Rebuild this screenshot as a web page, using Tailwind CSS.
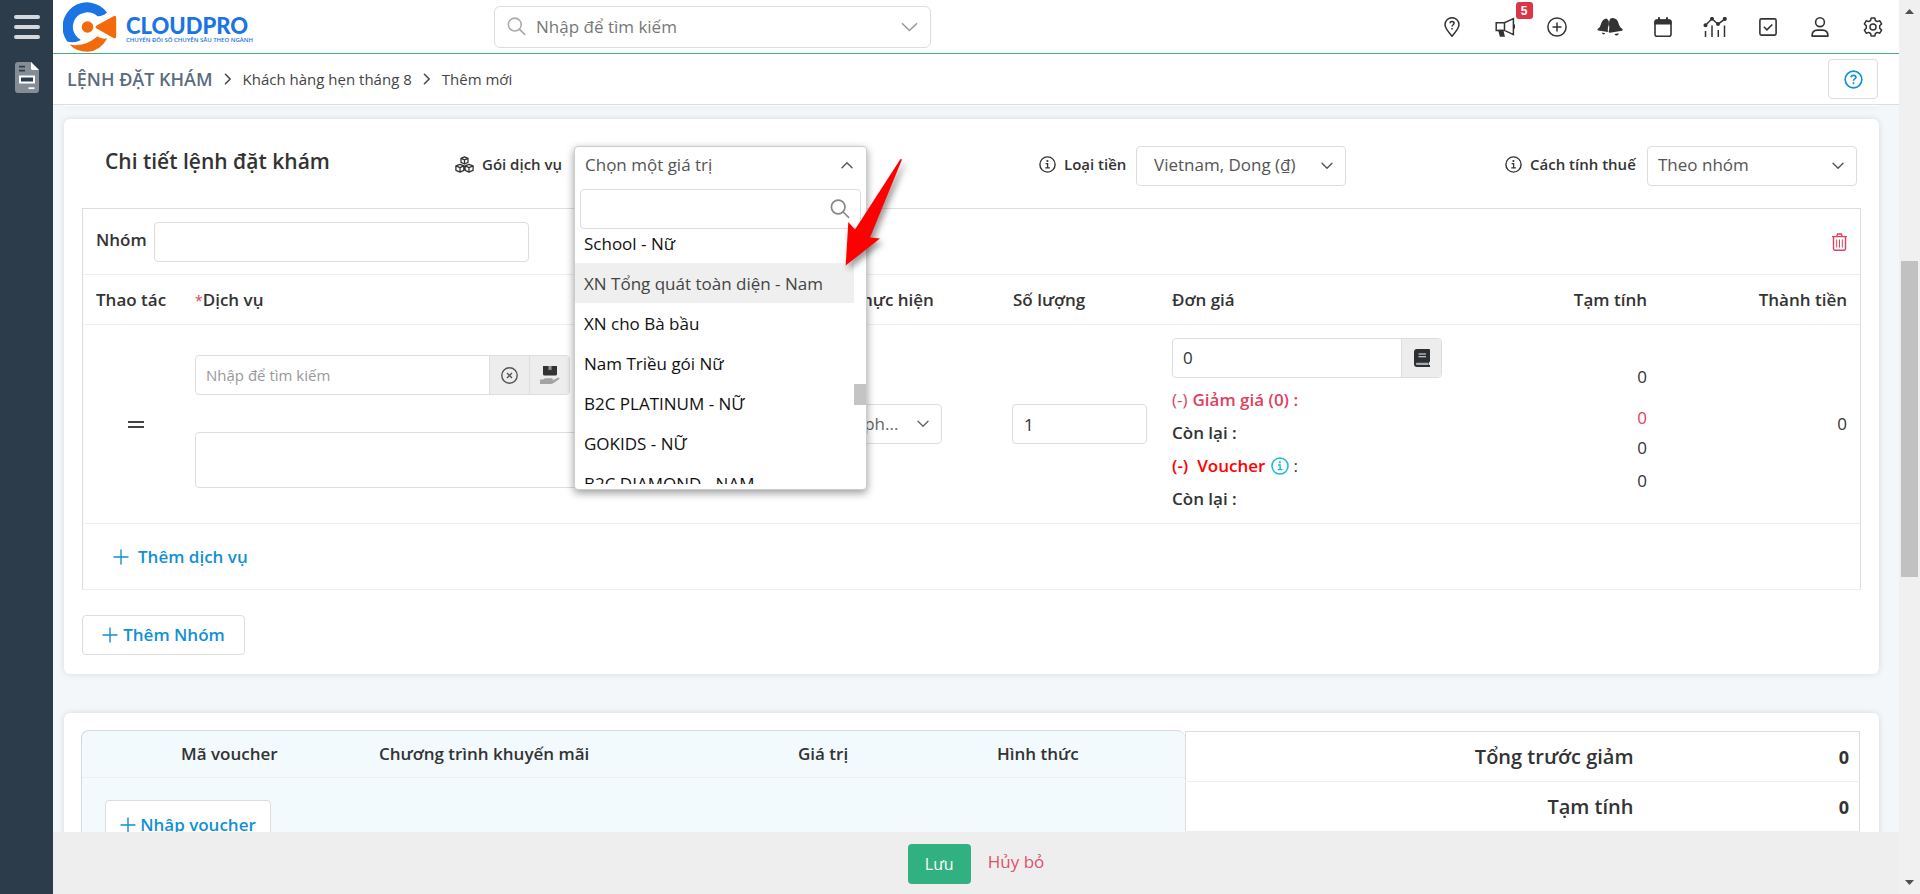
<!DOCTYPE html>
<html lang="vi">
<head>
<meta charset="utf-8">
<meta name="viewport" content="width=device-width, initial-scale=1">
<title>Lệnh đặt khám - Thêm mới</title>
<script src="https://cdn.jsdelivr.net/npm/@tailwindcss/browser@4"></script>
</head>
<body class="flex h-screen overflow-hidden bg-[#f3f7fa] font-['Open_Sans','Noto_Sans',sans-serif] text-[17px] text-[#333]">

<svg class="hidden" aria-hidden="true">
  <symbol id="chev" viewBox="0 0 12 8"><path d="M1 1.2 6 6.2 11 1.2" fill="none" stroke="currentColor" stroke-width="1.4" stroke-linecap="round" stroke-linejoin="round"/></symbol>
  <symbol id="info" viewBox="0 0 17 17"><circle cx="8.5" cy="8.5" r="7.6" fill="none" stroke="currentColor" stroke-width="1.4"/><path d="M6.6 7.6h2v4.2M6.3 11.9h4.6" fill="none" stroke="currentColor" stroke-width="1.3"/><circle cx="8.4" cy="5" r="1.1" fill="currentColor"/></symbol>
  <symbol id="plus" viewBox="0 0 16 16"><path d="M8 1v14M1 8h14" fill="none" stroke="currentColor" stroke-width="1.4" stroke-linecap="round"/></symbol>
  <symbol id="search" viewBox="0 0 20 20"><circle cx="8.2" cy="8" r="6.8" fill="none" stroke="currentColor" stroke-width="1.7"/><path d="m13.2 13 5.4 5.3" stroke="currentColor" stroke-width="1.7" stroke-linecap="round"/></symbol>
  <symbol id="crumb" viewBox="0 0 8 12"><path d="M1.4 1.2 6.2 6 1.4 10.8" fill="none" stroke="currentColor" stroke-width="1.5" stroke-linecap="round" stroke-linejoin="round"/></symbol>
</svg>

<aside class="flex w-[53px] shrink-0 flex-col items-center bg-[#2d3c4b]">
  <button aria-label="Menu" class="mt-[15px] flex w-[26px] flex-col gap-[6px]">
    <span class="h-[4px] w-full rounded-full bg-[#d5d8dc]"></span>
    <span class="h-[4px] w-full rounded-full bg-[#d5d8dc]"></span>
    <span class="h-[4px] w-full rounded-full bg-[#d5d8dc]"></span>
  </button>
  <a href="#" aria-label="Lệnh đặt khám" class="mt-[23px]">
    <svg class="h-[31px] w-6" viewBox="0 0 24 31"><path d="M3 0h13l8 8v20a3 3 0 0 1-3 3H3a3 3 0 0 1-3-3V3a3 3 0 0 1 3-3Z" fill="#848c95"/><path d="M16 0l8 8h-6.500a1.500 1.500 0 0 1-1.500-1.500Z" fill="#fff"/><path d="M4 4.600h6M4 8.600h6" stroke="#2d3c4b" stroke-width="1.600"/><path d="M5 14.500h14v6H5Z" fill="#2d3c4b" stroke="#fff" stroke-width="2"/><path d="M13.500 26.200h6" stroke="#fff" stroke-width="1.800"/></svg>
  </a>
</aside>

<div class="flex min-w-0 flex-1 flex-col">
  <header class="flex h-[54px] shrink-0 items-center border-b border-[#41b37c] bg-white">
    <a href="#" class="ml-[10px] flex w-[190px] shrink-0 items-center gap-[9px]" aria-label="CloudPro">
      <svg class="h-[51px] w-[54px] shrink-0" viewBox="0 0 54 51">
        <path d="M44 11.500A24.600 24.600 0 0 0 4.200 40.500Q11.500 42.500 18 39A14.600 14.600 0 1 1 34.500 15.300Q40 15.500 44 11.500Z" fill="#1b74e4"/>
        <path d="M6.500 43.500Q22 46.500 34.500 35.300Q38.500 38.500 44.300 37.300Q37 50.500 24.500 50.800Q13 50.600 6.500 43.500Z" fill="#f26a0b"/>
        <circle cx="24.500" cy="26" r="5.800" fill="#f26a0b"/><path d="M33.600 24.600 50.500 15.200Q53.200 14 53.200 17V35.500Q53.200 38.200 50.500 37L33.600 27.600Q31.500 26.100 33.600 24.600Z" fill="#f26a0b"/>
      </svg>
      <span class="flex flex-col pt-[7px] text-[#1b74e4]">
        <span class="font-['Lato'] text-[22px] leading-5 font-black">CLOUDPRO</span>
        <span class="text-[6px] leading-2 font-semibold whitespace-nowrap">CHUYỂN ĐỔI SỐ CHUYÊN SÂU THEO NGÀNH</span>
      </span>
    </a>
    <form class="ml-[241px] flex h-[42px] w-[437px] items-center rounded-md border border-[#ddd] px-3">
      <svg class="h-[19px] w-[19px] shrink-0 text-[#aaa]"><use href="#search"/></svg>
      <input aria-label="Tìm kiếm" placeholder="Nhập để tìm kiếm" class="ml-[10px] min-w-0 flex-1 bg-transparent outline-none placeholder:text-[#777]">
      <button type="button" aria-label="Mở bộ lọc"><svg class="h-3 w-[17px] text-[#999]" viewBox="0 0 17 10"><path d="M1 1.200 8.500 8.500 16 1.200" fill="none" stroke="currentColor" stroke-width="1.500"/></svg></button>
    </form>
    <nav class="ml-auto flex w-[473px] shrink-0 items-center pt-px text-[#333] *:flex *:flex-1 *:justify-center">
      <a href="#" aria-label="Trợ giúp"><svg class="h-5 w-5" viewBox="0 0 20 20" fill="none" stroke="currentColor" stroke-width="1.500"><path d="M10 19.200C7 15.600 3 11.200 3 7.700a7 7 0 0 1 14 0c0 3.500-4 7.900-7 11.500Z"/><path d="M7.900 6.200Q8 4.600 10 4.600t2.100 1.700c0 1.400-2.100 1.500-2.100 3.200"/><circle cx="10" cy="11.800" r=".5" fill="currentColor" stroke-width=".8"/></svg></a>
      <a href="#" aria-label="Thông báo" class="relative"><svg class="h-5 w-5" viewBox="0 0 20 20" fill="none" stroke="currentColor" stroke-width="1.500"><path d="M9.500 5.800v7.600M1.200 5.800h8.300L18.400 1.600v16L9.500 13.400H1.200ZM18.400 8.200h1v2.600h-1"/><path d="M4 13.500 5.500 19H9l-1.300-5.500Z" fill="currentColor"/></svg><span class="absolute -top-[15px] left-[37px] flex h-[17px] w-[17px] items-center justify-center rounded-[3px] bg-[#dc3545] font-['Liberation_Sans'] text-xs font-bold text-white">5</span></a>
      <a href="#" aria-label="Thêm nhanh"><svg class="h-5 w-5" viewBox="0 0 20 20" fill="none" stroke="currentColor" stroke-width="1.500"><circle cx="10" cy="10" r="9.100"/><path d="M10 5.500v9M5.500 10h9"/></svg></a>
      <a href="#" aria-label="Chuông"><svg class="h-5 w-[26px]" viewBox="0 0 26 20" fill="currentColor"><path d="M9.800 1.400Q5 2 4 7.100 3.400 10.200 1 11.800q-1.300 1.300.4 1.700l9.600 1.400q-.6-3 .7-6.700.9-4.500-1.900-6.800Z"/><path d="M13 1.900q-1.500 3.100-.9 6.600.5 3.200-.5 6 0 1.200 1.400 1.300l12-2.100q1.400-.7.300-1.800-2.500-1.600-3.400-4.500Q20.200 1 15.800 1q-1.600.1-2.800.9Z"/><path d="M4.500 15.600 8.200 16.200q-.8 1.700-2.300 1.100Zm13 1.500 4.300-.8q-.4 2.200-2.200 2.300-1.600 0-2.100-1.500Z"/></svg></a>
      <a href="#" aria-label="Lịch"><svg class="h-5 w-[18px]" viewBox="0 0 18 20"><rect x="1" y="3.200" width="16" height="16" rx="2" fill="none" stroke="currentColor" stroke-width="1.600"/><path d="M.4 7.600V4.500Q.4 2.300 3 2.300h12q2.600 0 2.600 2.200v3.100ZM4 .3h2v3H4ZM12 .3h2v3h-2Z" fill="currentColor"/></svg></a>
      <a href="#" aria-label="Báo cáo"><svg class="h-5 w-6" viewBox="0 0 24 20" fill="none" stroke="currentColor" stroke-width="1.500"><path d="M2.500 8.300 9 1.800l6 5.400 7-5.400M2.500 14V20M9 8.500V20M15.300 13V20M21.500 8.500V20"/><circle cx="2.500" cy="8.300" r="1.300" fill="currentColor"/><circle cx="9" cy="1.800" r="1.200" fill="currentColor"/><circle cx="15" cy="7" r="1.200" fill="currentColor"/><circle cx="21.800" cy="1.900" r="1.300" fill="currentColor"/></svg></a>
      <a href="#" aria-label="Công việc"><svg class="h-5 w-[18px]" viewBox="0 0 18 20" fill="none" stroke="currentColor" stroke-width="1.600"><rect x=".9" y="1.900" width="16.200" height="16.200" rx="1.500"/><path d="m4.900 9.800 3 3 5.400-5.300"/></svg></a>
      <a href="#" aria-label="Tài khoản"><svg class="h-5 w-[18px]" viewBox="0 0 18 20" fill="none" stroke="currentColor" stroke-width="1.600"><circle cx="9" cy="5.200" r="4.400"/><path d="M1 19.100q0-6 5.500-6h5q5.500 0 5.500 6Z" stroke-linejoin="round"/></svg></a>
      <a href="#" aria-label="Cài đặt"><svg class="h-5 w-5" viewBox="0 0 20 20" fill="none" stroke="currentColor" stroke-width="1.500" stroke-linejoin="round"><circle cx="10" cy="10" r="3"/><path d="M8.200 1h3.600l.6 2.500 1.900 1.100 2.500-.8 1.800 3.100-1.900 1.800v2.600l1.900 1.800-1.800 3.100-2.500-.8-1.900 1.100-.6 2.500H8.200l-.6-2.500-1.900-1.100-2.500.8-1.800-3.100 1.900-1.800V8.700L1.400 6.900l1.800-3.100 2.500.8 1.900-1.100Z"/></svg></a>
    </nav>
  </header>

  <div class="flex h-[51px] shrink-0 items-center border-b border-[#ddd] bg-white pr-[21px] pl-[14px]">
    <nav aria-label="Breadcrumb" class="flex items-center gap-[11px] text-[15px] text-[#444]">
      <a href="#" class="text-lg font-semibold text-[#5b6c7d]">LỆNH ĐẶT KHÁM</a>
      <svg class="h-3 w-2"><use href="#crumb"/></svg>
      <a href="#">Khách hàng hẹn tháng 8</a>
      <svg class="h-3 w-2"><use href="#crumb"/></svg>
      <span>Thêm mới</span>
    </nav>
    <button aria-label="Hướng dẫn" class="ml-auto flex h-10 w-[50px] items-center justify-center rounded border border-[#ddd] text-[#1290d4]">
      <svg class="h-[19px] w-[19px]" viewBox="0 0 20 20" fill="none" stroke="currentColor" stroke-width="1.700"><circle cx="10" cy="10" r="8.800"/><path d="M7.400 7.700Q7.600 5.700 10 5.700t2.600 2c0 1.700-2.600 1.700-2.600 3.500"/><circle cx="10" cy="13.900" r=".7" fill="currentColor" stroke-width=".9"/></svg>
    </button>
  </div>

  <main class="min-h-0 flex-1 overflow-hidden pr-5 pl-[11px]">
    <div class="mb-[13px] h-px rounded-b bg-white shadow-[0_0_6px_rgba(0,0,0,0.15)]"></div>

    <section class="rounded-md bg-white pt-[27px] pr-[18px] pb-[19px] pl-[18px] shadow-[0_0_6px_rgba(0,0,0,0.12)]">
      <div class="flex h-10 items-center pr-[4px] pl-[23px]">
        <h2 class="w-[350px] self-start text-[21px] leading-[30px] font-semibold">Chi tiết lệnh đặt khám</h2>
        <div class="flex items-center">
          <svg class="mb-[3px] h-[17px] w-[19px]" viewBox="0 0 19 17" fill="none" stroke="currentColor" stroke-width="1.300" stroke-linejoin="round"><path d="M9.500.8 13 2.400v4L9.500 8 6 6.400v-4ZM6 2.400l3.500 1.500L13 2.400M9.500 3.900V8M5 8.300l3.800 1.600v4.400L5 16.100.9 14.300V9.900ZM.9 9.900 5 11.600l3.800-1.700M5 11.600v4.500M14 8.300l4.100 1.600v4.400L14 16.100l-3.900-1.800V9.900ZM10.100 9.900l3.900 1.700 4.100-1.700M14 11.600v4.500"/></svg>
          <span id="pkg" class="w-[100px] pb-[3px] pl-[8px] text-[15px] font-semibold">Gói dịch vụ</span>
          <div class="relative h-10 w-[293px]">
            <div class="absolute top-0 left-0 z-20 w-full rounded border border-[#ccc] bg-white pb-[5px] shadow-[0_3px_8px_rgba(0,0,0,0.4)]">
              <button aria-labelledby="pkg" aria-expanded="true" class="flex h-[38px] w-full items-center justify-between pr-[13px] pb-[3px] pl-[10px] text-[#555]">Chọn một giá trị<svg class="h-2 w-3 rotate-180"><use href="#chev"/></svg></button>
              <div class="relative mx-[5px] mt-[4px]">
                <input aria-label="Tìm gói dịch vụ" class="block h-10 w-full rounded border border-[#ddd] pr-10 pl-3 outline-none">
                <svg class="absolute top-[10px] right-[11px] h-5 w-5 text-[#888]"><use href="#search"/></svg>
              </div>
              <div class="relative flex h-[255px] flex-col overflow-hidden">
                <ul role="listbox" aria-labelledby="pkg" class="-mt-[6px] mr-[12px] shrink-0 text-[#111] *:flex *:h-10 *:items-center *:pt-px *:pl-[9px]">
                  <li role="option">School - Nữ</li>
                  <li role="option" aria-selected="true" class="bg-[#efefef] text-[#444]">XN Tổng quát toàn diện - Nam</li>
                  <li role="option">XN cho Bà bầu</li>
                  <li role="option">Nam Triều gói Nữ</li>
                  <li role="option">B2C PLATINUM - NỮ</li>
                  <li role="option">GOKIDS - NỮ</li>
                  <li role="option">B2C DIAMOND - NAM</li>
                </ul>
                <span class="absolute top-[155px] right-0 h-[21px] w-3 bg-[#c4c4c4]"></span>
              </div>
            </div>
          </div>
        </div>
        <div class="ml-[172px] flex items-center">
          <svg class="mb-[3px] h-[17px] w-[17px]"><use href="#info"/></svg>
          <label for="cur" class="w-20 pb-[3px] pl-[8px] text-[15px] font-semibold">Loại tiền</label>
          <div class="relative text-[#555]">
            <select id="cur" class="h-10 w-[210px] appearance-none rounded border border-[#ddd] pb-[3px] pl-[17px]"><option>Vietnam, Dong (₫)</option></select>
            <svg class="pointer-events-none absolute top-4 right-[13px] h-2 w-3"><use href="#chev"/></svg>
          </div>
        </div>
        <div class="ml-auto flex items-center">
          <svg class="mb-[3px] h-[17px] w-[17px]"><use href="#info"/></svg>
          <label for="tax" class="w-[125px] pb-[3px] pl-[8px] text-[15px] font-semibold">Cách tính thuế</label>
          <div class="relative text-[#555]">
            <select id="tax" class="h-10 w-[210px] appearance-none rounded border border-[#ddd] pb-[3px] pl-[10px]"><option>Theo nhóm</option></select>
            <svg class="pointer-events-none absolute top-4 right-[13px] h-2 w-3"><use href="#chev"/></svg>
          </div>
        </div>
      </div>

      <div class="mt-[22px] border border-[#ddd] border-b-[#eee]">
        <div class="flex h-[65px] items-center px-[13px]">
          <label for="grp" class="w-[58px] pb-[4px] font-semibold">Nhóm</label>
          <input id="grp" class="h-10 w-[375px] rounded border border-[#ddd] px-3 outline-none">
          <button aria-label="Xóa nhóm" class="ml-auto text-[#e0405e]"><svg class="h-[18px] w-[15px]" viewBox="0 0 15 18" fill="none" stroke="currentColor" stroke-width="1.400"><path d="M0 3.600h15M5 3.200 5.600 1h3.800l.6 2.200M1.500 3.600v12.200q0 1.400 1.400 1.400h9.200q1.400 0 1.400-1.400V3.600"/><path d="M4.700 6.500v8M7.500 6.500v8M10.300 6.500v8" stroke-width="1"/></svg></button>
        </div>
        <table class="w-full table-fixed text-left">
          <colgroup><col class="w-[98px]"><col><col class="w-[204px]"><col class="w-[159px]"><col class="w-[298px]"><col class="w-[205px]"><col class="w-[199px]"></colgroup>
          <thead>
            <tr class="h-[50px] border-y border-[#eee] *:font-semibold">
              <th class="pl-[13px]">Thao tác</th>
              <th class="pl-[14px]"><span class="text-sm font-normal text-[#e0405e]">*</span>Dịch vụ</th>
              <th class="pl-[4px]">Phòng thực hiện</th>
              <th class="pl-[14px]">Số lượng</th>
              <th class="pl-[14px]">Đơn giá</th>
              <th class="pr-[14px] text-right">Tạm tính</th>
              <th class="pr-[13px] text-right">Thành tiền</th>
            </tr>
          </thead>
          <tbody>
            <tr class="h-[199px] border-b border-[#eee]">
              <td class="pl-[45px]"><button aria-label="Kéo để sắp xếp" class="flex w-4 flex-col gap-[3px]"><span class="h-[2px] w-full bg-[#444]"></span><span class="h-[2px] w-full bg-[#444]"></span></button></td>
              <td class="px-[14px] pb-[5px]">
                <div class="flex h-10 w-[375px] overflow-hidden rounded border border-[#ddd]">
                  <input aria-label="Dịch vụ" placeholder="Nhập để tìm kiếm" class="min-w-0 flex-1 pt-px pl-[10px] text-[15px] outline-none placeholder:text-[#999]">
                  <button aria-label="Xóa" class="flex w-10 items-center justify-center border-l border-[#ddd] bg-[#ededed] text-[#555]"><svg class="h-[17px] w-[17px]" viewBox="0 0 17 17" fill="none" stroke="currentColor" stroke-width="1.400"><circle cx="8.500" cy="8.500" r="7.700"/><path d="m6 6 5 5M11 6l-5 5"/></svg></button>
                  <button aria-label="Chọn dịch vụ" class="flex w-10 items-center justify-center border-l border-[#ddd] bg-[#ededed]"><svg class="h-[19px] w-5" viewBox="0 0 20 19"><path d="M3 0h14v8a1.500 1.500 0 0 1-1.500 1.500h-11A1.500 1.500 0 0 1 3 8Z" fill="#333"/><path d="M8.500 0h3v4.500L10 3.500l-1.500 1Z" fill="#999"/><path d="M0 13.500h3l2-1.300h7q1.800.9.400 2.100H9.500h3.200l5.200-2.500q2.300-.4 1.400 1.200l-5.600 4q-1.200.8-2.500.9H0Z" fill="#a3a3a3"/></svg></button>
                </div>
                <textarea aria-label="Ghi chú dịch vụ" class="mt-[37px] block h-14 w-[500px] resize-none rounded border border-[#ddd] outline-none"></textarea>
              </td>
              <td class="pl-[14px]"><div class="relative w-[133px] text-[#666]"><select aria-label="Phòng thực hiện" class="h-10 w-full appearance-none rounded border border-[#ddd] pl-[8px]"><option>Chọn ph...</option></select><svg class="pointer-events-none absolute top-4 right-[13px] h-2 w-3"><use href="#chev"/></svg></div></td>
              <td class="px-[13px]"><input aria-label="Số lượng" value="1" class="block h-10 w-[135px] rounded border border-[#ddd] pl-[11px] outline-none"></td>
              <td class="pt-[13px] pl-[14px] align-top">
                <div class="mb-[5px] flex h-10 w-[270px] overflow-hidden rounded border border-[#ddd]">
                  <input aria-label="Đơn giá" value="0" class="min-w-0 flex-1 pl-[10px] outline-none">
                  <button aria-label="Bảng giá" class="flex w-10 items-center justify-center border-l border-[#ddd] bg-[#ededed]"><svg class="h-[18px] w-4" viewBox="0 0 16 18"><path d="M3 0h12q1 0 1 1v11.600l-1 1V16h1v2H3a3 3 0 0 1-3-3V3a3 3 0 0 1 3-3Z" fill="#2c2f33"/><path d="M4.500 5h7.500M4.500 7.800h7.500" stroke="#eee" stroke-width="1.100"/><path d="M3 13.700h11.500v2.200H3q-1.200-.1-1.200-1.100t1.200-1.100Z" fill="#aaa"/></svg></button>
                </div>
                <ul class="font-semibold *:flex *:h-[33px] *:items-center">
                  <li class="text-[#e0405e]"><span class="font-normal">(-)</span><span class="ml-[5px]">Giảm giá (0) :</span></li>
                  <li>Còn lại :</li>
                  <li class="text-[#f00]"><span>(-)</span><span class="ml-[9px]">Voucher</span><svg class="mr-[4px] ml-[6px] h-[18px] w-[18px] text-[#12bcd8]"><use href="#info"/></svg><span class="font-normal text-[#333]">:</span></li>
                  <li>Còn lại :</li>
                </ul>
              </td>
              <td class="pt-10 pr-[14px] text-right align-top leading-6"><div>0</div><div class="mt-[17px] text-[#e0405e]">0</div><div class="mt-[6px]">0</div><div class="mt-[9px]">0</div></td>
              <td class="pr-[13px] text-right">0</td>
            </tr>
          </tbody>
        </table>
        <div class="flex h-[65px] items-center px-[30px]"><button class="flex items-center gap-[9px] font-semibold text-[#1290d4]"><svg class="h-4 w-4"><use href="#plus"/></svg>Thêm dịch vụ</button></div>
      </div>
      <button class="mt-[25px] flex h-10 w-[163px] items-center justify-center gap-[5px] rounded border border-[#ddd] font-semibold text-[#1290d4]"><svg class="h-4 w-4"><use href="#plus"/></svg>Thêm Nhóm</button>
    </section>

    <section class="mt-[39px] flex items-start rounded-t-md bg-white pt-[17px] pr-[19px] pl-[17px] shadow-[0_0_6px_rgba(0,0,0,0.12)]">
      <div class="min-w-0 flex-1 overflow-hidden rounded-t-lg border-t border-l border-[#d5dade] bg-[#f2fafd]">
        <table class="w-full table-fixed text-left">
          <colgroup><col class="w-[99px]"><col class="w-[198px]"><col><col class="w-[199px]"><col class="w-[188px]"></colgroup>
          <thead><tr class="h-[46px] border-b border-[#eee] *:font-semibold"><td></td><th>Mã voucher</th><th>Chương trình khuyến mãi</th><th>Giá trị</th><th>Hình thức</th></tr></thead>
          <tbody><tr><td colspan="5" class="h-[90px] pt-[22px] pl-[23px] align-top"><button class="flex h-[50px] w-[166px] items-center justify-center gap-[4px] rounded border border-[#ddd] bg-white font-semibold text-[#1290d4]"><svg class="h-4 w-4"><use href="#plus"/></svg>Nhập voucher</button></td></tr></tbody>
        </table>
      </div>
      <table class="mt-px w-[675px] table-fixed border border-[#ddd] text-right">
        <tbody>
          <tr class="h-[50px] border-b border-[#eee]"><th class="text-xl font-semibold" scope="row">Tổng trước giảm</th><td class="w-[226px] pr-[10px] text-lg font-bold">0</td></tr>
          <tr class="h-[50px] border-b border-[#eee]"><th class="text-xl font-semibold" scope="row">Tạm tính</th><td class="pr-[10px] text-lg font-bold">0</td></tr>
        </tbody>
      </table>
    </section>
  </main>

  <footer class="flex h-[62px] shrink-0 items-center justify-center bg-[#eee] pt-[2px]">
    <button class="h-10 w-[63px] rounded bg-[#31b082] text-base text-white">Lưu</button>
    <a href="#" class="pb-[4px] pl-[17px] text-[#e0506c]">Hủy bỏ</a>
  </footer>
</div>

<div class="flex w-[21px] shrink-0 flex-col items-center bg-[#f0f0f0] py-[9px]" aria-hidden="true">
  <svg class="h-[5px] w-[9px]" viewBox="0 0 9 5"><path d="M0 5h9L4.500 0Z" fill="#505050"/></svg>
  <span class="mt-[247px] h-[316px] w-[17px] bg-[#c1c1c1]"></span>
  <svg class="mt-auto h-[5px] w-[9px]" viewBox="0 0 9 5"><path d="M0 0h9L4.500 5Z" fill="#505050"/></svg>
</div>

<!-- Pointer over the highlighted package -->
<svg class="pointer-events-none absolute top-[155px] left-[840px] z-30 h-[120px] w-[72px] drop-shadow-[3px_4px_3px_rgba(0,0,0,0.4)]" viewBox="840 155 72 120" aria-hidden="true"><path d="M900.500 159 902 159.500 870 237.500 880 238.500 845.700 265.500 848.300 222 855 229.500Z" fill="#f00"/></svg>
</body>
</html>
